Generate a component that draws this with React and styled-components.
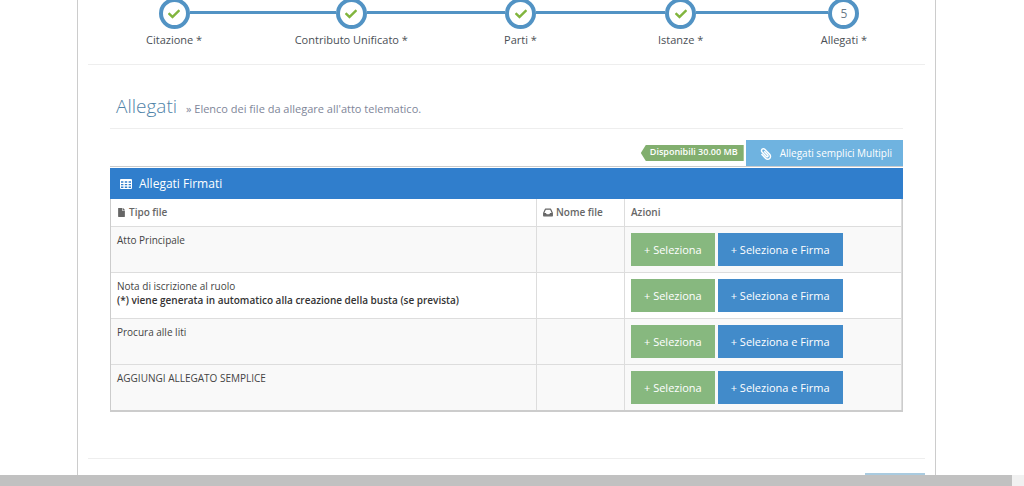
import styled, { createGlobalStyle } from 'styled-components';
import { FaCheck, FaFile, FaPaperclip } from 'react-icons/fa';

const GlobalStyle = createGlobalStyle`
    * {
        box-sizing: border-box;
    }
    body {
        margin: 0;
        background-color: #fff;
        color: #444;
        font-family: "Open Sans", "Noto Sans", sans-serif;
        font-size: 10px;
        line-height: 14px;
    }
`;

const Page = styled.div`
    display: flex;
    flex-direction: column;
    height: 100vh;
    overflow: hidden;
`;

const Viewport = styled.div`
    flex: 1;
    min-height: 0;
    overflow: hidden;
    padding: 0 88px 0 77px;
`;

const Container = styled.main`
    border: 1px solid #ccc;
    border-width: 0 1px;
    padding: 0 10px;
`;

const Steps = styled.ol`
    list-style: none;
    margin: -2px 0 0;
    padding: 0 2px 14px;
    display: grid;
    grid-template-columns: 168fr 186fr 152fr 168fr 158fr;
    border-bottom: 1px solid #eee;
`;

const Step = styled.li`
    text-align: center;
    font-size: 11px;
    line-height: 20px;
    color: #4a4f55;
`;

const Track = styled.div`
    display: flex;
    align-items: center;
`;

const Line = styled.span`
    flex: 1;
    height: 3px;
    margin-bottom: 2px;
    background-color: ${({ $hidden }) => ($hidden ? "transparent" : "#5293c4")};
`;

const Circle = styled.span`
    width: 31px;
    height: 31px;
    border: 4px solid #5293c4;
    border-radius: 50%;
    display: flex;
    align-items: center;
    justify-content: center;
    color: ${({ $done }) => ($done ? "#81b53e" : "#6b7a88")};
    font-size: 12px;
`;

const StepLabel = styled.span`
    display: block;
    padding-top: 1px;
`;

const Content = styled.section`
    padding: 28px 22px 46px;
    border-bottom: 1px solid #eee;
`;

const Title = styled.h1`
    margin: 0 0 11px;
    padding: 0 6px 6px;
    border-bottom: 1px solid #eee;
    font-size: 19px;
    line-height: 27px;
    font-weight: 300;
    color: #4f83a8;

    small {
        margin-left: 4px;
        font-size: 11px;
        font-weight: 400;
        color: #808699;
    }
`;

const Toolbar = styled.div`
    display: flex;
    align-items: center;
    justify-content: flex-end;
    gap: 2px;
    border-bottom: 1px solid #ccc;
    margin-bottom: 1px;
`;

const Badge = styled.span`
    padding: 0 6px 2px 9px;
    background-color: #82af6f;
    clip-path: polygon(5px 0, 100% 0, 100% 100%, 5px 100%, 0 50%);
    color: #fff;
    font-size: 9px;
    font-weight: 600;
    line-height: 14px;
`;

const Button = styled.button`
    border: 0;
    font-family: inherit;
    font-size: 11px;
    line-height: 17px;
    padding: 8px 13px;
    color: #fff;
    background-color: ${({ $green }) => ($green ? "#87b87f" : "#428bca")};
    cursor: pointer;
`;

const MultiButton = styled(Button)`
    display: flex;
    align-items: center;
    gap: 8px;
    padding: 5px 11px 4px 14px;
    font-size: 10px;
    font-weight: 500;
    background-color: #6fb3e0;

    svg {
        font-size: 12px;
        transform: scaleX(-1);
    }
`;

const Widget = styled.div`
    border: 1px solid #ccc;
    border-width: 0 1px 2px;
`;

const WidgetHeader = styled.h2`
    margin: 0 -1px;
    padding: 0 10px;
    display: flex;
    align-items: center;
    gap: 7px;
    background-color: #307ecc;
    color: #fff;
    font-size: 12px;
    font-weight: 400;
    line-height: 31px;
`;

const Table = styled.table`
    width: 100%;
    table-layout: fixed;
    border-collapse: collapse;

    th, td {
        border-right: 1px solid #ddd;
        text-align: left;
        vertical-align: top;
    }
    th {
        height: 27px;
        padding: 6px 6px 0;
        color: #666;
        font-weight: 600;
    }
    th svg {
        vertical-align: -1px;
        margin-right: 3px;
    }
    td {
        height: 46px;
        padding: 6px 6px 0;
        border-top: 1px solid #ddd;
    }
    tbody tr {
        background-color: #f9f9f9;
    }
    tbody tr:nth-child(2) {
        background-color: #fff;
    }
    strong {
        display: block;
        font-weight: 600;
        color: #333;
    }
`;

const NameCol = styled.col`
    width: 88px;
`;

const ActionsCol = styled.col`
    width: 277px;
`;

const Actions = styled.div`
    display: flex;
    gap: 3px;
`;

const Footer = styled.footer`
    display: flex;
    justify-content: flex-end;
    padding-top: 14px;
`;

const NextButton = styled(Button)`
    width: 60px;
    height: 33px;
    background-color: #a9cbe0;
`;

const Scrollbar = styled.div`
    flex: none;
    height: 11px;
    padding-right: 12px;
    background-color: #f1f1f1;
`;

const Thumb = styled.div`
    height: 100%;
    background-color: #c1c1c1;
`;

const steps = ["Citazione *", "Contributo Unificato *", "Parti *", "Istanze *", "Allegati *"];

const files = [
    { id: 1, tipo: "Atto Principale" },
    {
        id: 2,
        tipo: "Nota di iscrizione al ruolo",
        nota: "(*) viene generata in automatico alla creazione della busta (se prevista)",
    },
    { id: 3, tipo: "Procura alle liti" },
    { id: 4, tipo: "AGGIUNGI ALLEGATO SEMPLICE" },
];

function TableIcon() {
    return <svg width="12" height="10" viewBox="0 0 12 10" aria-hidden="true">
        <rect width="12" height="10" rx="1" fill="#fff" />
        <path
            d="M1 2.2h2.4v1.5H1zM4.8 2.2h2.4v1.5H4.8zM8.6 2.2H11v1.5H8.6zM1 4.9h2.4v1.4H1zM4.8 4.9h2.4v1.4H4.8zM8.6 4.9H11v1.4H8.6zM1 7.5h2.4V9H1zM4.8 7.5h2.4V9H4.8zM8.6 7.5H11V9H8.6z"
            fill="#307ecc"
        />
    </svg>
}

function InboxIcon() {
    return <svg width="10" height="9" viewBox="0 0 10 9" aria-hidden="true">
        <path d="M2.4 1.2h5.2L9.3 5v2.8H.7V5z" fill="none" stroke="currentColor" strokeWidth="1.2" strokeLinejoin="round" />
        <path d="M.7 5h2.2l.8 1.3h2.6L7.1 5h2.2v2.8H.7z" fill="currentColor" />
    </svg>
}

function Wizard() {
    const last = steps.length - 1;

    return <Steps>
        {
            steps.map((label, i) => <Step key={label}>
                <Track>
                    <Line $hidden={i === 0} />
                    <Circle $done={i < last}>{i < last ? <FaCheck /> : i + 1}</Circle>
                    <Line $hidden={i === last} />
                </Track>
                <StepLabel>{label}</StepLabel>
            </Step>)
        }
    </Steps>
}

function FileTable() {
    return <Widget>
        <WidgetHeader><TableIcon /> Allegati Firmati</WidgetHeader>
        <Table>
            <colgroup>
                <col />
                <NameCol />
                <ActionsCol />
            </colgroup>
            <thead>
                <tr>
                    <th><FaFile size={9} />Tipo file</th>
                    <th><InboxIcon />Nome file</th>
                    <th>Azioni</th>
                </tr>
            </thead>
            <tbody>
                {
                    files.map(file => <tr key={file.id}>
                        <td>
                            {file.tipo}
                            {file.nota && <strong>{file.nota}</strong>}
                        </td>
                        <td></td>
                        <td>
                            <Actions>
                                <Button type="button" $green>+ Seleziona</Button>
                                <Button type="button">+ Seleziona e Firma</Button>
                            </Actions>
                        </td>
                    </tr>)
                }
            </tbody>
        </Table>
    </Widget>
}

function App() {
    return <Page>
        <GlobalStyle />
        <Viewport>
            <Container>
                <Wizard />
                <Content>
                    <Title>Allegati <small>» Elenco dei file da allegare all'atto telematico.</small></Title>
                    <Toolbar>
                        <Badge>Disponibili 30.00 MB</Badge>
                        <MultiButton type="button"><FaPaperclip /> Allegati semplici Multipli</MultiButton>
                    </Toolbar>
                    <FileTable />
                </Content>
                <Footer>
                    <NextButton type="button" aria-label="Avanti" />
                </Footer>
            </Container>
        </Viewport>
        <Scrollbar>
            <Thumb />
        </Scrollbar>
    </Page>
}

export default App;
